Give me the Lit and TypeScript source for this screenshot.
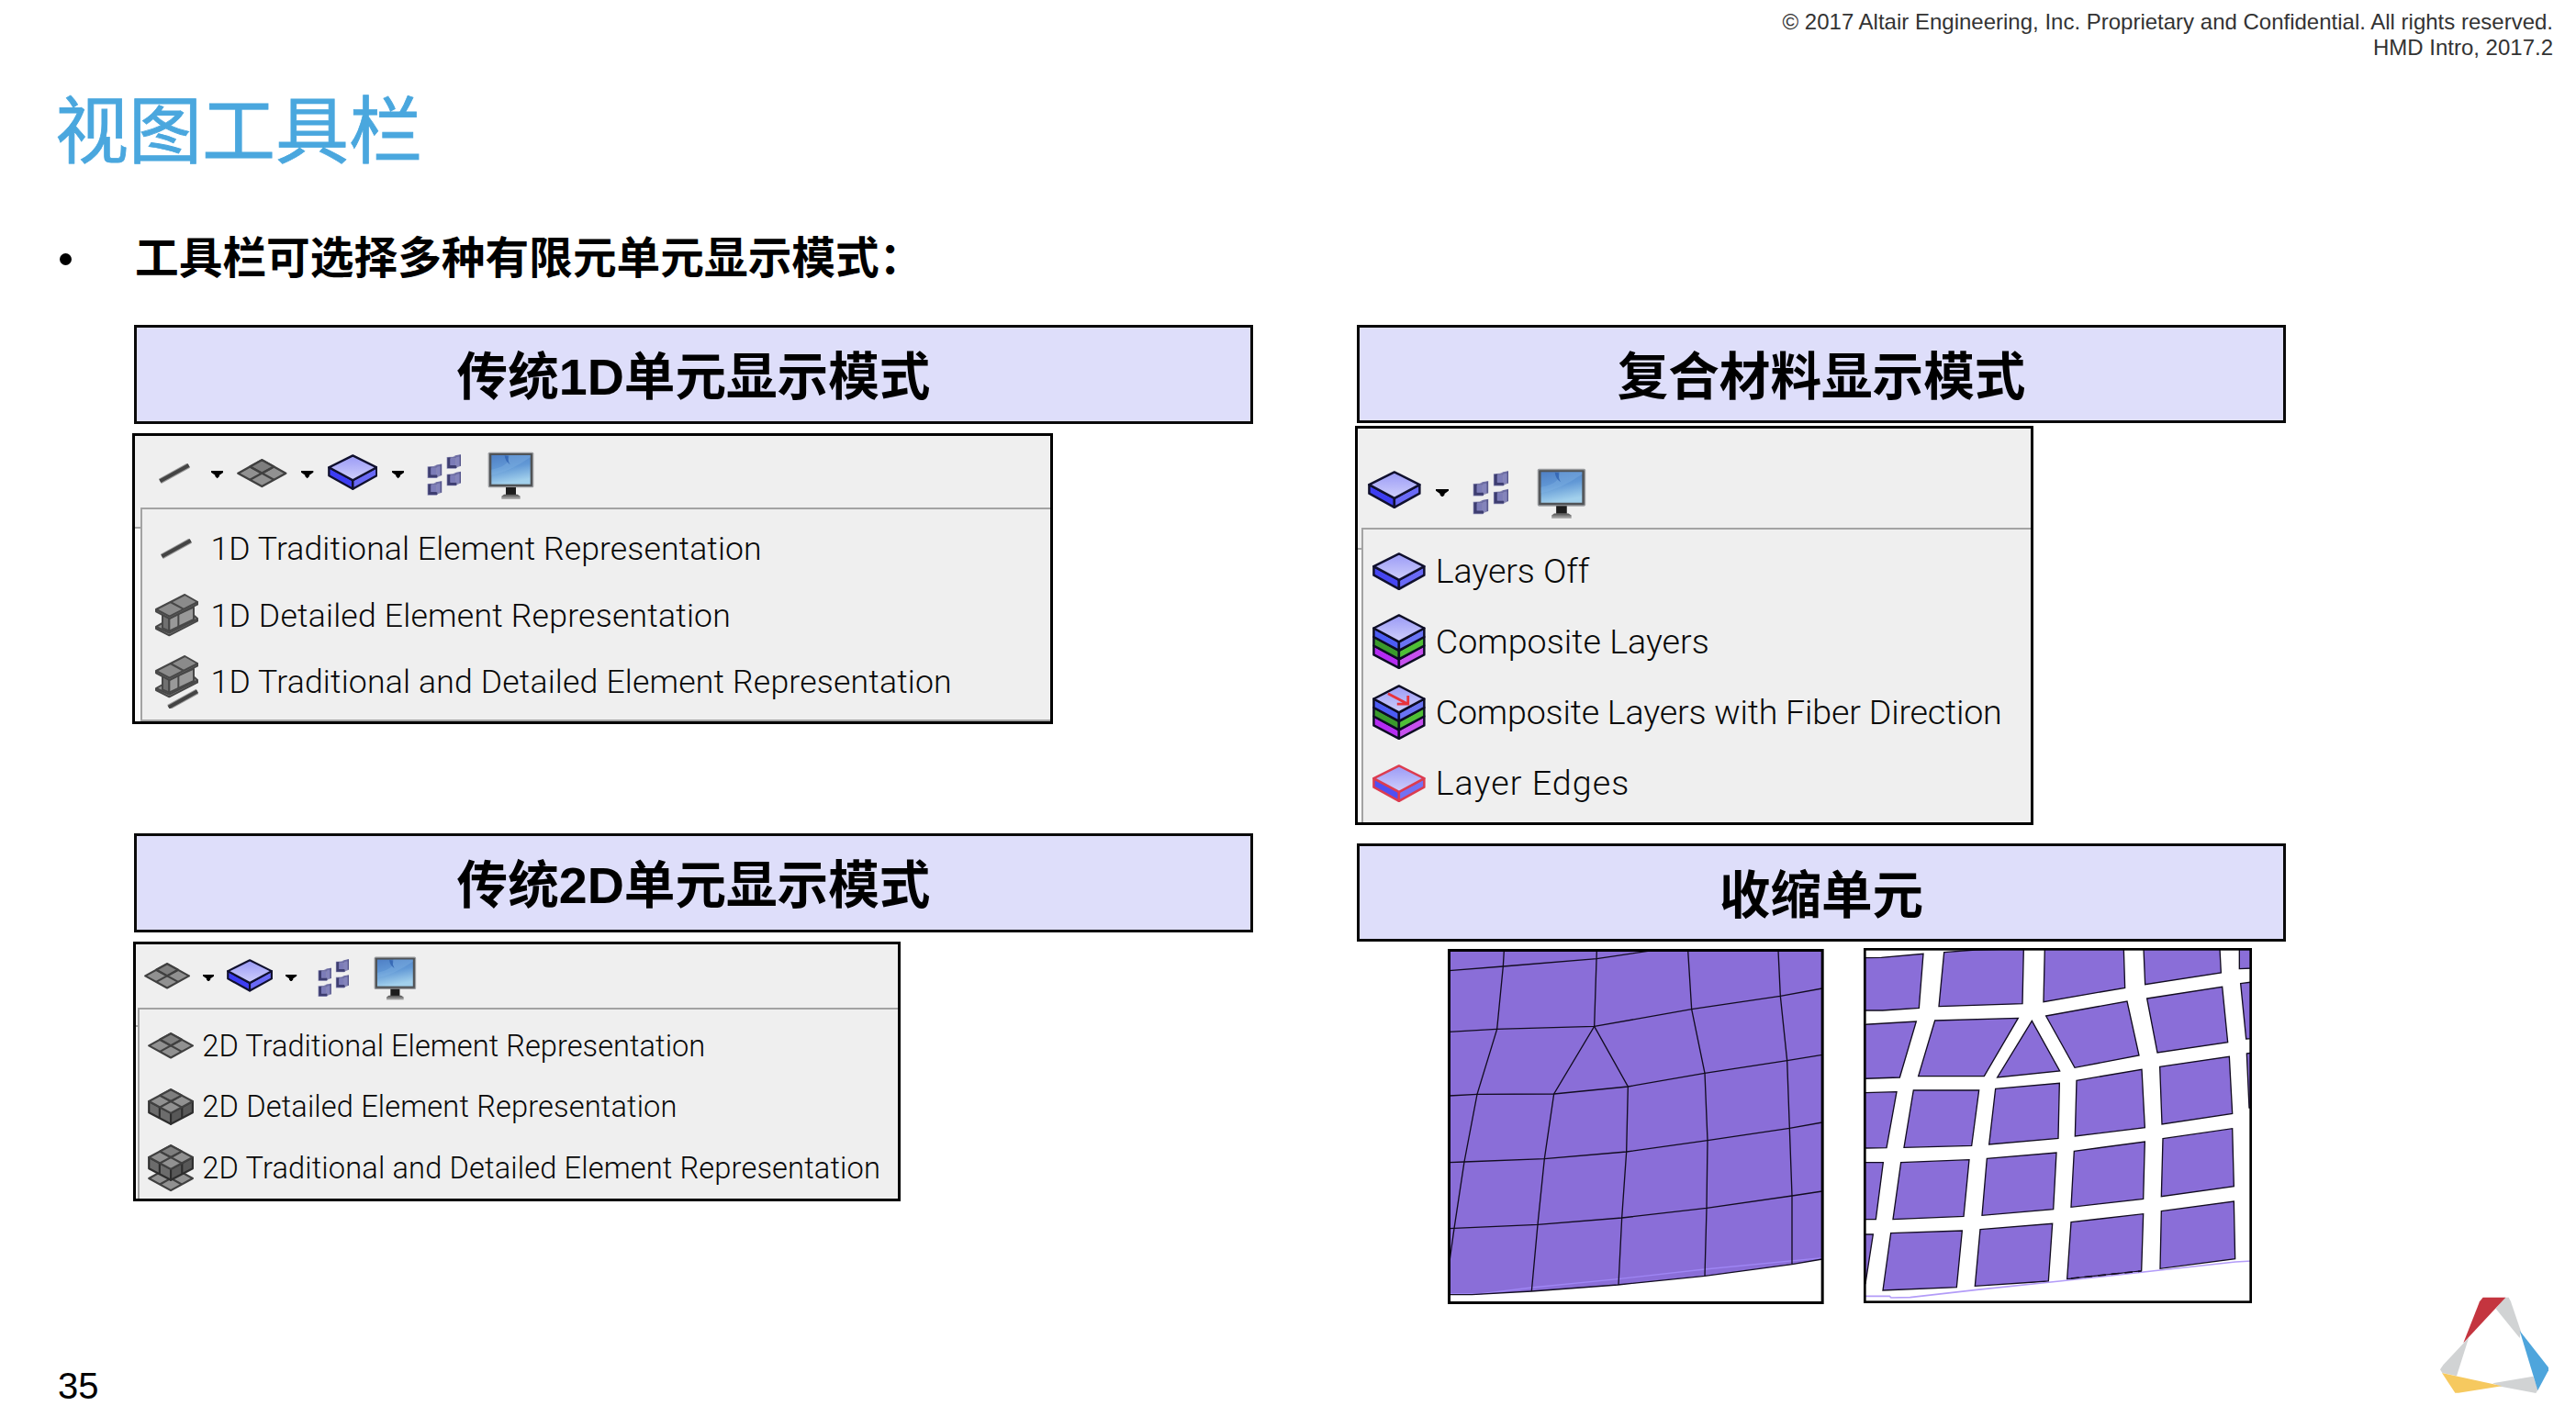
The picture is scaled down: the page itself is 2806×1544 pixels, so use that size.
import { LitElement, html, svg, css, type SVGTemplateResult } from "lit";
import { customElement, property } from "lit/decorators.js";
import { styleMap } from "lit/directives/style-map.js";

interface Glyph {
  w: number;
  h: number;
  art: SVGTemplateResult;
}

const bar = (x: number, y: number) => svg`
  <path d="M${x + 4} ${y + 58} L${x + 98} ${y + 6}" stroke="#9a9a9a" stroke-width="18"/>
  <path d="M${x + 4} ${y + 58} L${x + 98} ${y + 6}" stroke="#444" stroke-width="12"/>`;

const meshCells = (cx: number, top: number, w: number, h: number) => svg`
  <g fill="#919191" stroke="#404040" stroke-width="7" stroke-linejoin="round">
    <path d="M${cx} ${top} L${cx + w / 2} ${top + h / 2} L${cx} ${top + h} L${cx - w / 2} ${top + h / 2} Z"/>
    <path d="M${cx} ${top} L${cx + w / 4} ${top + h / 4} L${cx} ${top + h / 2} L${cx - w / 4} ${top + h / 4} Z" fill="#7e7e7e"/>
    <path d="M${cx - w / 4} ${top + h / 4} L${cx + w / 4} ${top + (h * 3) / 4} M${cx + w / 4} ${top + h / 4} L${cx - w / 4} ${top + (h * 3) / 4}"/>
  </g>`;

const cube = svg`
  <g stroke="#2d2d2d" stroke-width="7" stroke-linejoin="round">
    <path d="M4 46 L82 88 V127 L4 86 Z" fill="#6c6c6c"/>
    <path d="M160 46 L82 88 V127 L160 86 Z" fill="#585858"/>
    <path d="M42 67 V107 M122 67 V107" fill="none"/>
  </g>
  ${meshCells(82, 4, 156, 84)}`;

const beam = svg`
  <g fill="#8b8b8b" stroke="#474747" stroke-width="6" stroke-linejoin="round">
    <path d="M3 108 L24 96 L128 72 L139 82 L139 88 L46 136 L3 114 Z"/>
    <path d="M3 108 L46 128 L139 82" fill="none"/>
    <path d="M24 66 V112 L46 122 L46 80 Z" fill="#707070"/>
    <path d="M46 80 L126 44 V84 L46 122 Z" fill="#999"/>
    <path d="M76 66 V108" fill="none"/>
    <path d="M3 51 L97 3 L139 27 V34 L47 81 L3 58 Z"/>
    <path d="M3 51 L47 74 L139 27 M50 27 L94 51" fill="none"/>
  </g>`;

const plate = (line: string, dark: string, mid: string) => svg`
  <defs>
    <linearGradient id="top" x1="0" y1="0" x2="0" y2="1">
      <stop offset="0" stop-color="#9a9af6"/><stop offset="1" stop-color="#cfcffb"/>
    </linearGradient>
  </defs>
  <g stroke="${line}" stroke-width="7" stroke-linejoin="round">
    <path d="M4 43 L82 85 V113 L4 70 Z" fill="${dark}"/>
    <path d="M160 43 L82 85 V113 L160 70 Z" fill="${mid}"/>
    <path d="M82 4 L160 43 L82 85 L4 43 Z" fill="url(#top)"/>
  </g>`;

const stack = svg`
  <defs>
    <linearGradient id="top" x1="0" y1="0" x2="0" y2="1">
      <stop offset="0" stop-color="#9a9af6"/><stop offset="1" stop-color="#cfcffb"/>
    </linearGradient>
  </defs>
  <g stroke="#0c0c24" stroke-width="7" stroke-linejoin="round">
    <path d="M4 98 L82 140 V167 L4 126 Z" fill="#b52cf2"/>
    <path d="M160 98 L82 140 V167 L160 126 Z" fill="#c650ee"/>
    <path d="M4 71 L82 113 V140 L4 98 Z" fill="#3a9a2c"/>
    <path d="M160 71 L82 113 V140 L160 98 Z" fill="#4fbe36"/>
    <path d="M4 44 L82 86 V113 L4 71 Z" fill="#4c5cf4"/>
    <path d="M160 44 L82 86 V113 L160 71 Z" fill="#6a74f4"/>
    <path d="M82 4 L160 44 L82 86 L4 44 Z" fill="url(#top)"/>
  </g>`;

const chip = (x: number, y: number) => svg`
  <g transform="translate(${x} ${y})">
    <path d="M0 9 L20 8 L28 4 L47 0 V38 L34 43 L30 47 H0 Z" fill="#8a8ab4"/>
    <path d="M2 11 L12 10 V36 H32 V45 H2 Z" fill="#3d3d70"/>
    <path d="M12 10 L26 9 L30 4 L46 2 V10 L30 13 H12 Z" fill="#6c6ca2"/>
    <path d="M11 14 H28 V36 H11 Z" fill="#7c7cb8"/>
    <path d="M30 10 L42 7 V36 L30 38 Z" fill="#8484bc"/>
    <path d="M44 2 V38" stroke="#54548a" stroke-width="4"/>
  </g>`;

const GLYPHS: Record<string, Glyph> = {
  line: { w: 161, h: 75, art: bar(36, 0) },
  barRow: { w: 102, h: 64, art: bar(0, 0) },
  caret: { w: 40, h: 25, art: svg`<path d="M0 0 H40 V5 L27 14 V18 L20 25 L13 18 V14 L0 5 Z" fill="#000"/>` },
  mesh: { w: 164, h: 105, art: meshCells(82, 4, 156, 86) },
  meshRow: { w: 164, h: 94, art: meshCells(82, 4, 156, 86) },
  cube: { w: 164, h: 131, art: cube },
  cubeMesh: { w: 164, h: 168, art: svg`${meshCells(82, 78, 156, 86)}${cube}` },
  plate: { w: 164, h: 135, art: plate("#10102e", "#3d3df2", "#6a6af6") },
  plateRow: { w: 164, h: 117, art: plate("#10102e", "#4646f2", "#6a6af6") },
  edges: { w: 164, h: 117, art: plate("#dc3c50", "#4f4ff2", "#7272f4") },
  stack: { w: 164, h: 171, art: stack },
  fiber: {
    w: 164,
    h: 171,
    art: svg`${stack}<path d="M48 28 L106 58 M110 34 V60 H76" fill="none" stroke="#e8323c" stroke-width="8"/>`,
  },
  beam: { w: 142, h: 140, art: beam },
  beamBar: { w: 142, h: 174, art: svg`${beam}${bar(40, 112)}` },
  cluster: { w: 112, h: 135, art: svg`${chip(2, 31)}${chip(65, 0)}${chip(2, 87)}${chip(65, 56)}` },
  monitor: {
    w: 153,
    h: 161,
    art: svg`
      <defs>
        <linearGradient id="scr" x1="0" y1="0" x2="0.25" y2="1">
          <stop offset="0" stop-color="#4f80c6"/><stop offset="0.5" stop-color="#6299d6"/><stop offset="1" stop-color="#a2d0ec"/>
        </linearGradient>
        <linearGradient id="base" x1="0" y1="0" x2="0" y2="1">
          <stop offset="0" stop-color="#4c4c4c"/><stop offset="1" stop-color="#b8b8b8"/>
        </linearGradient>
      </defs>
      <rect x="2" y="5" width="149" height="116" rx="5" fill="#9b9da0"/>
      <rect x="6" y="9" width="141" height="108" rx="2" fill="#505356"/>
      <rect x="13" y="15" width="127" height="95" fill="url(#scr)"/>
      <path d="M13 80 Q70 70 140 22 V15 H70 Q76 50 13 62 Z" fill="#86b6e6" opacity="0.35"/>
      <path d="M56 16 Q58 36 74 46 Q66 34 68 18 Z" fill="#2e5fae" opacity="0.75"/>
      <rect x="60" y="120" width="33" height="24" fill="#1d1d1d"/>
      <path d="M54 143 H98 L107 149 V159 H46 V149 Z" fill="url(#base)"/>`,
  },
};

const icon = (name: string) => {
  const g = GLYPHS[name];
  return html`<svg
    class="icon icon-${name}"
    width="${g.w / 30}em"
    height="${g.h / 30}em"
    viewBox="0 0 ${g.w} ${g.h}"
    preserveAspectRatio="none"
    fill="none"
  >${g.art}</svg>`;
};

interface Entry {
  icon: string;
  label: string;
  /** Letter spacing of the label, in em. */
  track: number;
}

@customElement("tool-menu")
export class ToolMenu extends LitElement {
  @property({ attribute: false }) tools: string[] = [];
  @property({ attribute: false }) entries: Entry[] = [];

  static styles = css`
    :host {
      display: flex;
      flex-direction: column;
      box-sizing: border-box;
      border: 3px solid #000;
      background: #efefef;
      overflow: hidden;
    }
    .toolbar {
      display: flex;
      align-items: center;
      box-sizing: border-box;
      flex: none;
      height: var(--bar-height);
      padding: var(--bar-top) 0 0 var(--bar-left);
      gap: 1.52em;
    }
    .icon {
      display: block;
      flex: none;
    }
    .icon-cluster {
      margin-left: 0.95em;
    }
    .icon-monitor {
      margin-left: 1.4em;
    }
    .body {
      display: flex;
      flex: 1;
      min-height: 0;
    }
    .gutter {
      flex: none;
      box-sizing: border-box;
      width: var(--gutter);
      margin-top: 2.05em;
      border-top: 2px solid #a6a6a6;
      background: #fafafa;
    }
    .list {
      flex: 1;
      border-top: 2px solid #a3a3a3;
      border-left: 2px solid #a3a3a3;
      border-bottom: var(--foot, 0px) solid #a3a3a3;
      padding-top: 0.65em;
    }
    .entry {
      display: flex;
      align-items: center;
      height: 7.28em;
    }
    .slot {
      display: flex;
      justify-content: center;
      width: 7.45em;
      flex: none;
    }
    .label {
      font: 300 3.56em / 1 Roboto, "Liberation Sans", sans-serif;
      padding-top: 0.04em;
      color: #080808;
      white-space: pre;
    }
  `;

  render() {
    return html`
      <div class="toolbar">${this.tools.map(icon)}</div>
      <div class="body">
        <div class="gutter"></div>
        <div class="list">
          ${this.entries.map(
            (e) => html`<div class="entry">
              <span class="slot">${icon(e.icon)}</span>
              <span class="label" style=${styleMap({ letterSpacing: `${e.track}em` })}>${e.label}</span>
            </div>`
          )}
        </div>
      </div>
    `;
  }
}

const MESH_LINES = [
  "55,112 232,98 538,73 705,48",
  "55,312 210,303 530,294 848,238 1138,195 1275,170",
  "55,521 147,516 398,515 640,491 891,447 1160,406 1275,387",
  "55,739 105,737 367,727 635,704 900,667 1168,627 1275,608",
  "55,955 345,942 620,920 897,888 1176,848 1275,833",
  "55,1171 130,1171 325,1160 607,1139 891,1110 1176,1072 1275,1055",
  "235,46 232,98 212,303 147,516 105,737 72,955 58,1055",
  "538,46 530,294 398,515 367,727 345,942 325,1160",
  "530,294 640,491 635,704 620,920 609,1139",
  "836,46 848,238 891,447 900,667 897,888 891,1110",
  "1131,46 1138,195 1160,406 1168,627 1176,848 1176,1072",
];

const SHRUNK_CELLS = [
  "60,70 118,69 255,57 241,234 122,242 60,242",
  "323,52 425,44 583,40 579,220 306,229",
  "652,40 910,40 914,168 648,214",
  "975,40 1224,40 1228,119 980,157",
  "1288,40 1330,40 1330,104 1288,106",
  "60,288 232,278 178,461 60,465",
  "293,275 565,267 454,457 239,457",
  "610,276 701,440 497,461",
  "656,260 921,212 960,389 750,429",
  "986,203 1232,165 1250,346 1020,380",
  "1292,154 1330,149 1330,334 1310,335",
  "60,511 168,508 135,691 60,692",
  "223,503 437,503 413,684 192,690",
  "491,498 700,480 696,660 470,680",
  "756,471 969,435 979,625 751,653",
  "1028,426 1255,393 1265,579 1035,614",
  "1312,383 1330,380 1330,560 1320,560",
  "60,739 124,739 100,925 60,925",
  "182,739 405,730 387,915 156,925",
  "463,726 690,707 680,892 447,912",
  "748,702 979,671 974,858 738,885",
  "1038,661 1265,628 1270,817 1033,850",
  "60,974 91,974 66,1135 60,1135",
  "149,970 382,962 364,1147 123,1157",
  "441,958 677,939 664,1127 424,1143",
  "738,934 974,907 968,1094 725,1120",
  "1033,898 1270,866 1274,1054 1029,1086",
];

@customElement("app-root")
export class AppRoot extends LitElement {
  static styles = css`
    :host {
      display: block;
      width: 2806px;
      height: 1544px;
      background: #fff;
      color: #000;
      font-family: "Liberation Sans", "Noto Sans CJK SC", sans-serif;
    }
    .slide {
      display: flex;
      flex-direction: column;
      box-sizing: border-box;
      height: 1544px;
      overflow: hidden;
    }
    .notice {
      height: 84px;
      box-sizing: border-box;
      padding: 10px 25px 0 0;
      text-align: right;
      font-size: 24px;
      line-height: 28px;
      color: #333;
      flex: none;
    }
    .title {
      flex: none;
      margin: 0;
      height: 156px;
      box-sizing: border-box;
      padding: 2px 0 0 60px;
      font-size: 80px;
      font-weight: 400;
      line-height: 116px;
      color: #4aa7de;
      -webkit-text-stroke: 0.8px #4aa7de;
    }
    .lead {
      flex: none;
      display: flex;
      align-items: center;
      height: 84px;
      padding-left: 65px;
      font-size: 47.7px;
      font-weight: 700;
    }
    .lead-text {
      padding-bottom: 9px;
    }
    .dot {
      width: 13px;
      height: 13px;
      border-radius: 50%;
      background: #000;
      margin-right: 69px;
    }
    .columns {
      display: flex;
      flex: none;
      height: 1070px;
      padding: 30px 0 0 144px;
      box-sizing: border-box;
    }
    .left {
      width: 1332px;
      flex: none;
    }
    .right {
      width: 1014px;
    }
    .heading {
      display: flex;
      align-items: center;
      justify-content: center;
      box-sizing: border-box;
      border: 3px solid #0a0a0a;
      background: #dedefa;
      padding-top: 6px;
      font-size: 55.6px;
      line-height: 60px;
      font-weight: 700;
      margin: 0;
    }
    .left .heading {
      width: 1219px;
      height: 108px;
      margin-left: 2px;
    }
    .right .heading {
      width: 1012px;
      height: 107px;
      margin-left: 2px;
    }
    .menu-1d {
      font-size: 10px;
      width: 1003px;
      height: 317px;
      margin: 10px 0 119px;
      --bar-height: 78px;
      --bar-top: 7px;
      --bar-left: 14px;
      --gutter: 6px;
      --foot: 2px;
    }
    .menu-2d {
      font-size: 9.17px;
      width: 836px;
      height: 283px;
      margin-top: 10px;
      margin-left: 1px;
      --bar-height: 69px;
      --bar-top: 4px;
      --bar-left: 9px;
      --gutter: 2px;
    }
    .menu-layers {
      font-size: 10.57px;
      width: 739px;
      height: 435px;
      margin: 3px 0 20px;
      --bar-height: 108px;
      --bar-top: 32px;
      --bar-left: 11px;
      --gutter: 4px;
    }
    .meshes {
      display: flex;
      gap: 43px;
      padding: 7px 0 0 101px;
    }
    .mesh {
      display: block;
    }
    .footer {
      display: flex;
      justify-content: space-between;
      height: 150px;
      flex: none;
    }
    .page {
      padding: 94px 0 0 63px;
      font-size: 40px;
      line-height: 44px;
    }
    .logo {
      display: block;
    }
  `;

  render() {
    return html`
      <div class="slide">
        <div class="notice">
          <div>© 2017 Altair Engineering, Inc. Proprietary and Confidential. All rights reserved.</div>
          <div>HMD Intro, 2017.2</div>
        </div>
        <h1 class="title">视图工具栏</h1>
        <div class="lead">
          <span class="dot"></span><span class="lead-text">工具栏可选择多种有限元单元显示模式：</span>
        </div>
        <div class="columns">
          <div class="left">
            <h2 class="heading">传统1D单元显示模式</h2>
            <tool-menu
              class="menu-1d"
              .tools=${["line", "caret", "mesh", "caret", "plate", "caret", "cluster", "monitor"]}
              .entries=${[
                { icon: "barRow", label: "1D Traditional Element Representation", track: 0.003 },
                { icon: "beam", label: "1D Detailed Element Representation", track: 0.006 },
                { icon: "beamBar", label: "1D Traditional and Detailed Element Representation", track: 0.005 },
              ]}
            ></tool-menu>
            <h2 class="heading">传统2D单元显示模式</h2>
            <tool-menu
              class="menu-2d"
              .tools=${["mesh", "caret", "plate", "caret", "cluster", "monitor"]}
              .entries=${[
                { icon: "meshRow", label: "2D Traditional Element Representation", track: 0.001 },
                { icon: "cube", label: "2D Detailed Element Representation", track: 0.004 },
                { icon: "cubeMesh", label: "2D Traditional and Detailed Element Representation", track: 0.004 },
              ]}
            ></tool-menu>
          </div>
          <div class="right">
            <h2 class="heading">复合材料显示模式</h2>
            <tool-menu
              class="menu-layers"
              .tools=${["plate", "caret", "cluster", "monitor"]}
              .entries=${[
                { icon: "plateRow", label: "Layers Off", track: -0.002 },
                { icon: "stack", label: "Composite Layers", track: 0.001 },
                { icon: "fiber", label: "Composite Layers with Fiber Direction", track: -0.005 },
                { icon: "edges", label: "Layer Edges", track: 0.028 },
              ]}
            ></tool-menu>
            <h2 class="heading">收缩单元</h2>
            <div class="meshes">
              <svg class="mesh" width="410" height="388" viewBox="51 38 1230 1164" fill="none">
                <rect x="51" y="38" width="1230" height="1164" fill="#fff" />
                <path d="M55 46 H1275 V1055 L1176 1072 L891 1110 L607 1139 L325 1160 L130 1171 H55 Z" fill="#8a6ed8" />
                <polyline points="55,1168 160,1168 325,1148 607,1120 891,1088 1275,1051" stroke="#9f86f4" stroke-width="4" />
                ${MESH_LINES.map((p) => svg`<polyline points="${p}" stroke="#120c20" stroke-width="4"/>`)}
                <rect x="55.5" y="45.5" width="1220" height="1152" stroke="#000" stroke-width="9" />
              </svg>
              <svg class="mesh" width="423" height="387" viewBox="60 38 1269 1161" fill="none">
                <rect x="60" y="38" width="1269" height="1161" fill="#fff" />
                ${SHRUNK_CELLS.map((p) => svg`<polygon points="${p}" fill="#8a6ed8" stroke="#120c20" stroke-width="4"/>`)}
                <polyline points="60,1176 145,1176 150,1181 212,1180 430,1155 700,1127 1029,1091 1275,1064 1330,1061" stroke="#b39cf8" stroke-width="5" />
                <polyline points="738,1118 968,1094" stroke="#120c20" stroke-width="5" stroke-dasharray="26 18" />
                <rect x="64" y="42" width="1261" height="1153" stroke="#000" stroke-width="8" />
              </svg>
            </div>
          </div>
        </div>
        <div class="footer">
          <div class="page">35</div>
          <svg class="logo" width="206" height="150" viewBox="0 42 618 450" fill="none">
            <path d="M385 101 L398 101 L405 115 L438 212 L434 234 L356 138 Z" fill="#d1d3d4" />
            <path d="M255 246 L268 232 L228 358 L181 348 L174 337 L184 322 Z" fill="#d1d3d4" />
            <path d="M345 382 L478 359 L494 402 L487 414 L372 392 Z" fill="#d1d3d4" />
            <path d="M314 101 H388 L354 138 L250 250 L303 115 Z" fill="#c4353f" />
            <path d="M434 210 L528 330 V340 L493 405 Z" fill="#4ea5dc" />
            <path d="M180 348 L376 391 L234 413 L223 413 Z" fill="#f6c95f" />
          </svg>
        </div>
      </div>
    `;
  }
}
